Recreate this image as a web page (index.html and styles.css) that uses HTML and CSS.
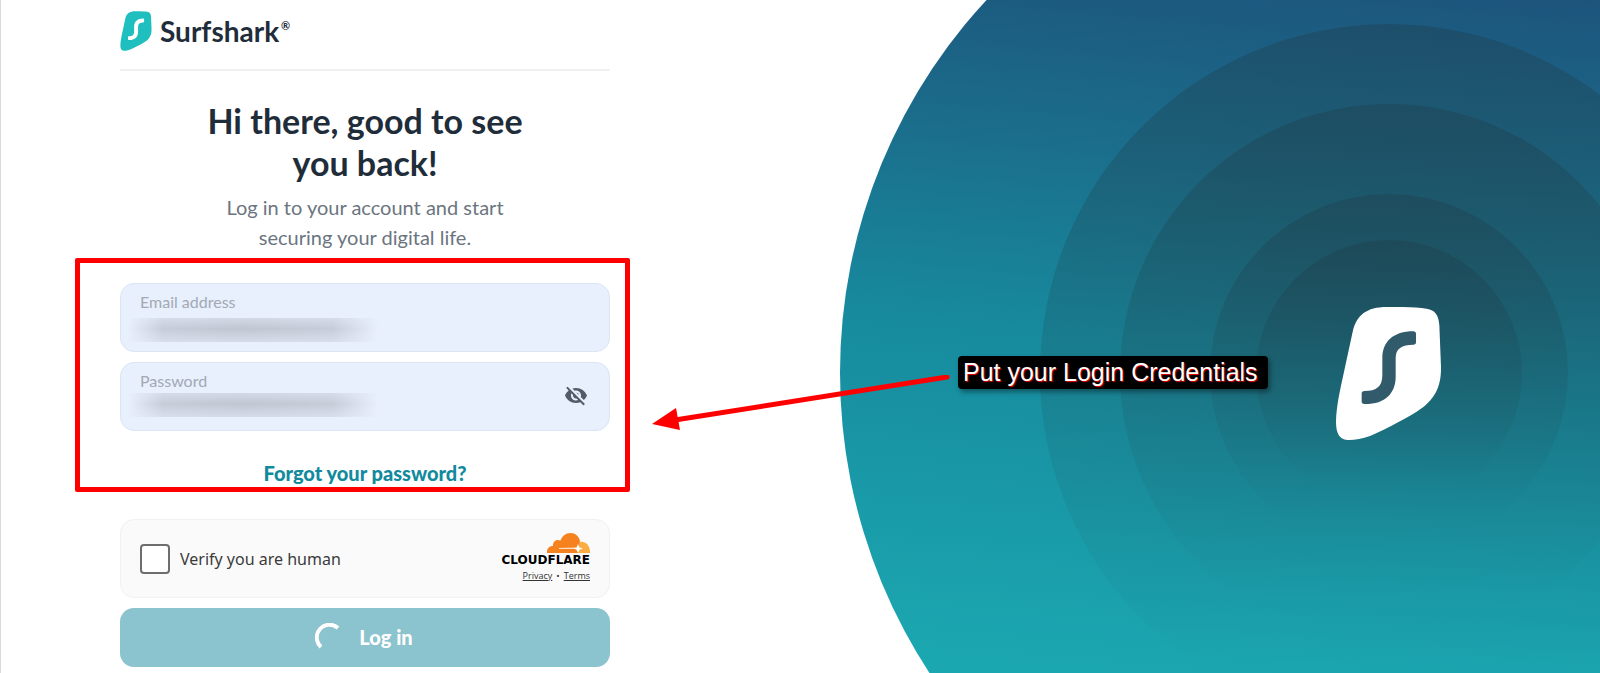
FILE: index.html
```html
<!DOCTYPE html>
<html lang="en">
<head>
<meta charset="utf-8">
<meta name="viewport" content="width=device-width, initial-scale=1">
<title>Surfshark – Log in</title>
<link rel="stylesheet" href="styles.css">
</head>
<body>
<div class="page">
  <main class="panel">
    <header class="brand">
      <svg class="brand-mark" viewBox="316 259 320 404" aria-hidden="true">
        <path fill="#1fbfbf" d="M470 261C520 260 560 262 590 266C615 270 626 285 628 315L633 440C634 500 615 540 560 575C510 605 460 630 420 648C395 657 370 661 352 660C328 658 318 640 318 605C319 560 330 510 340 465L368 335C380 285 410 261 470 261Z"/>
        <path fill="#fff" d="M550 334q8 0 8 8v24q0 8-8 8C515 375 497 385 497 415V470C497 520 465 553 403 552q-8 0-8-8V521q0-8 8-8C440 513 457 500 457 465V415C457 365 490 334 550 334Z"/>
      </svg>
      <span class="brand-name">Surfshark<sup class="brand-reg">®</sup></span>
    </header>

    <h1 class="title">Hi there, good to see you back!</h1>
    <p class="subtitle">Log in to your account and start securing your digital life.</p>

    <form class="form">
      <div class="credentials">
        <div class="field">
          <label class="field-label" for="email">Email address</label>
          <input class="field-input" id="email" type="email">
          <span class="redacted"></span>
        </div>
        <div class="field">
          <label class="field-label" for="password">Password</label>
          <input class="field-input" id="password" type="password">
          <span class="redacted redacted-high"></span>
          <button class="reveal" type="button" aria-label="Show password">
            <svg viewBox="0 0 24 24" width="24" height="24" aria-hidden="true">
              <path fill="#525c66" d="M12 6.500c2.760 0 5 2.240 5 5 0 .510-.100 1-.240 1.460l3.060 3.060c1.390-1.230 2.490-2.770 3.180-4.530C21.270 7.110 17 4 12 4c-1.270 0-2.490.200-3.640.570l2.170 2.170c.470-.140.960-.240 1.470-.240zM2.710 3.160a1 1 0 0 0 0 1.410l1.970 1.970A11.900 11.900 0 0 0 1 11.500C2.730 15.890 7 19 12 19c1.520 0 2.970-.300 4.310-.820l2.720 2.720a1 1 0 0 0 1.410-1.410L4.130 3.160a1 1 0 0 0-1.420 0zM12 16.500c-2.760 0-5-2.240-5-5 0-.770.180-1.500.490-2.140l1.570 1.570c-.030.180-.060.370-.060.570 0 1.660 1.340 3 3 3 .200 0 .380-.030.570-.070L14.140 16c-.650.320-1.370.500-2.140.500zm2.970-5.330a2.970 2.970 0 0 0-2.640-2.640z"/>
            </svg>
          </button>
        </div>
        <a class="forgot" href="#forgot">Forgot your password?</a>
      </div>

      <div class="verify">
        <label class="verify-label"><input class="verify-box" type="checkbox">Verify you are human</label>
        <div class="cloudflare">
          <svg class="cloud" viewBox="0 0 43 20" aria-hidden="true">
            <path fill="#fbad41" d="M33 9c5-1 10 3 10 10v1H29z"/>
            <path fill="#f6821f" d="M0 20c-.500-4 2-7 6-7C5.500 9 9 5.500 13.500 7.500C15 3 19 0 23.500 0C28.500 0 32 3.500 33 8L31 20Z"/>
            <path fill="#fde0c0" d="M12 15L29 14.500v1.500L12 16z"/>
            <path fill="#fff" d="M31 11l1.500 3.500 3.500 1-3.500 1.200L31 20l-1.500-3.300-2.500-1.200 2.500-1z"/>
          </svg>
          <span class="cloudflare-name">CLOUDFLARE</span>
          <span class="cloudflare-links"><a href="#privacy">Privacy</a><span>•</span><a href="#terms">Terms</a></span>
        </div>
      </div>

      <button class="submit" type="submit">
        <svg width="28" height="28" viewBox="0 0 28 28" aria-hidden="true">
          <path fill="none" stroke="#fff" stroke-width="4" d="M6 24A12 12 0 0 1 23 5"/>
        </svg>
        Log in
      </button>
    </form>
  </main>

  <svg class="art" viewBox="730 0 870 673" preserveAspectRatio="xMidYMid slice" aria-hidden="true">
    <defs>
      <linearGradient id="sea" gradientUnits="userSpaceOnUse" x1="1270" y1="-60" x2="1200" y2="680">
        <stop offset="0" stop-color="#1d507a"/>
        <stop offset=".28" stop-color="#1b6c8b"/>
        <stop offset=".55" stop-color="#178a9e"/>
        <stop offset="1" stop-color="#1ba7b0"/>
      </linearGradient>
      <linearGradient id="ring" x1="0" y1="0" x2="0" y2="1">
        <stop offset="0" stop-color="#1f3b46" stop-opacity=".36"/>
        <stop offset=".92" stop-color="#1f3b46" stop-opacity="0"/>
      </linearGradient>
    </defs>
    <circle cx="1388" cy="373" r="548" fill="url(#sea)"/>
    <circle cx="1389" cy="373" r="349" fill="url(#ring)"/>
    <circle cx="1389" cy="373" r="269" fill="url(#ring)"/>
    <circle cx="1389" cy="373" r="179" fill="url(#ring)"/>
    <circle cx="1389" cy="373" r="133" fill="url(#ring)"/>
    <svg x="1336" y="307" width="106" height="134" viewBox="318 261 318 402">
      <path fill="#fff" d="M470 261C520 260 560 262 590 266C615 270 626 285 628 315L633 440C634 500 615 540 560 575C510 605 460 630 420 648C395 657 370 661 352 660C328 658 318 640 318 605C319 560 330 510 340 465L368 335C380 285 410 261 470 261Z"/>
      <path fill="#315a6b" d="M550 334q8 0 8 8v24q0 8-8 8C515 375 497 385 497 415V470C497 520 465 553 403 552q-8 0-8-8V521q0-8 8-8C440 513 457 500 457 465V415C457 365 490 334 550 334Z"/>
    </svg>
  </svg>

  <svg class="arrow" width="300" height="60" viewBox="650 375 300 60" aria-hidden="true">
    <path d="M675 420L947 377" fill="none" stroke="#f00" stroke-width="5" stroke-linecap="round"/>
    <path d="M652 424L676 408L680 430Z" fill="#f00"/>
  </svg>
  <div class="callout">Put your Login Credentials</div>
</div>
</body>
</html>
```

FILE: styles.css
```css
* {
  box-sizing: border-box;
}

body {
  margin: 0;
  background: #fff;
  font-family: Lato, "Liberation Sans", sans-serif;
  color: #1f2d3a;
}

.page {
  position: relative;
  display: grid;
  grid-template-columns: 73fr 87fr;
  min-height: 100vh;
  overflow: hidden;
}

.panel {
  padding: 0 120px 6px 119px;
  border-left: 1px solid #d9d9d9;
}

.brand {
  display: flex;
  align-items: center;
  gap: 8px;
  height: 71px;
  padding-bottom: 8px;
  border-bottom: 2px solid #eff0f1;
}

.brand-mark {
  width: 32px;
  height: 40px;
}

.brand-name {
  font-size: 28px;
  font-weight: 700;
  line-height: 36px;
}

.brand-reg {
  margin-left: 2px;
  font-size: 11px;
  line-height: 0;
  vertical-align: 12px;
}

.title {
  width: 330px;
  margin: 29px auto 0;
  font-size: 34px;
  line-height: 42px;
  text-align: center;
}

.subtitle {
  width: 290px;
  margin: 8px auto 0;
  font-size: 20px;
  line-height: 30px;
  color: #6b757f;
  text-align: center;
}

.credentials {
  position: relative;
  display: flex;
  flex-direction: column;
  gap: 10px;
  margin-top: 31px;
}

.credentials::after {
  content: "";
  position: absolute;
  inset: -25px -20px -5px -45px;
  border: 5px solid #f00;
  border-radius: 2px;
  pointer-events: none;
}

.field {
  position: relative;
}

.field-input {
  display: block;
  width: 100%;
  height: 69px;
  padding: 28px 60px 8px 20px;
  border: 1px solid #dce5f3;
  border-radius: 14px;
  background: #e8effd;
  font: inherit;
}

.field-label {
  position: absolute;
  top: 9px;
  left: 20px;
  font-size: 16px;
  line-height: 20px;
  color: #a2a9b4;
}

.redacted {
  position: absolute;
  top: 35px;
  left: 8px;
  width: 250px;
  height: 24px;
  background: linear-gradient(90deg, #e8effd, #c6ccd8 14%, #c0c6d1 45%, #c6ccd8 82%, #e8effd);
  mask-image: linear-gradient(#0008, #000 45%, #0007);
}

.redacted-high {
  top: 31px;
}

.reveal {
  position: absolute;
  top: 22px;
  right: 22px;
  display: flex;
  padding: 0;
  border: 0;
  background: none;
}

.forgot {
  align-self: center;
  margin-top: 19px;
  padding-bottom: 1px;
  font-size: 20px;
  font-weight: 900;
  line-height: 26px;
  color: #118a9e;
  text-decoration: none;
}

.verify {
  display: flex;
  align-items: center;
  justify-content: space-between;
  height: 79px;
  margin-top: 32px;
  padding: 0 19px;
  border: 1px solid #eff1f2;
  border-radius: 14px;
  background: #fafafa;
}

.verify-label {
  display: flex;
  align-items: center;
  gap: 10px;
  font-family: "Noto Sans", "Open Sans", sans-serif;
  font-size: 16px;
  color: #3a3a3a;
}

.verify-box {
  appearance: none;
  width: 30px;
  height: 30px;
  margin: 0;
  border: 2px solid #6d6d6d;
  border-radius: 4px;
  background: #fff;
}

.cloudflare {
  display: flex;
  flex-direction: column;
  align-items: flex-end;
}

.cloud {
  width: 43px;
  height: 20px;
}

.cloudflare-name {
  font-family: "DejaVu Sans", sans-serif;
  font-size: 12px;
  font-weight: 700;
  line-height: 14px;
  color: #000;
}

.cloudflare-links {
  display: flex;
  gap: 4px;
  font-family: "Open Sans", sans-serif;
  font-size: 9px;
  line-height: 18px;
  color: #333;
}

.cloudflare-links a {
  color: inherit;
}

.submit {
  display: flex;
  align-items: center;
  justify-content: center;
  gap: 16px;
  width: 100%;
  height: 59px;
  margin-top: 10px;
  padding: 0 2px 2px 0;
  border: 0;
  border-radius: 14px;
  background: #8bc3ce;
  font: 900 20px Lato, sans-serif;
  color: #fff;
}

.art {
  display: block;
  width: 100%;
  height: 100%;
}

.arrow {
  position: absolute;
  top: 375px;
  left: 650px;
}

.callout {
  position: absolute;
  top: 356px;
  left: 958px;
  padding: 0 10px 1px 5px;
  border-radius: 4px;
  background: #000;
  box-shadow: 2px 3px 5px #0006;
  font-family: "Liberation Sans", Arial, sans-serif;
  font-size: 25px;
  line-height: 32px;
  color: #fff;
  text-shadow: 1px 1px 1px #e00;
  white-space: nowrap;
}
```
